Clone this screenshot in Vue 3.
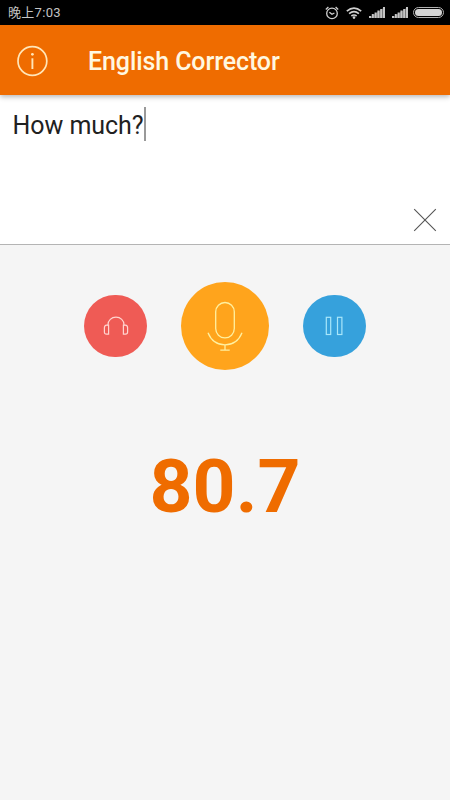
<script setup>
    import { ref } from 'vue';

    const time = '晚上7:03';
    const title = 'English Corrector';
    const sentence = ref('How much?');
    const score = ref('80.7');

    // heights of the signal strength bars
    const bars = [2, 4, 5.5, 7.5, 9, 11];

    const clear = () => {
        sentence.value = '';
    };
</script>

<template>
    <div class="screen">
        <!-- Status bar -->
        <div class="status-bar">
            <span class="status-time">{{ time }}</span>
            <div class="status-icons">
                <svg class="alarm" width="14" height="14" viewBox="0 0 14 14">
                    <circle cx="7" cy="7.4" r="5.3" />
                    <path d="M4.4 6.2L7 8.3L9.4 7M.8 3.4L3.4 1.1M13.2 3.4L10.6 1.1" />
                </svg>
                <svg class="wifi" width="16" height="12" viewBox="0 0 16 12">
                    <path d="M.8 4.1Q8 -2 15.2 4.1M3.1 6.6Q8 2.6 12.9 6.6M5.4 9Q8 7 10.6 9" />
                    <circle cx="8" cy="10.6" r="1.3" />
                </svg>
                <svg v-for="n in 2" :key="n" class="signal" width="16" height="11" viewBox="0 0 16 11">
                    <path class="wedge" d="M0 11L16 0V11Z" />
                    <rect
                        v-for="(h, i) in bars"
                        :key="i"
                        :x="i * 2.8"
                        :y="11 - h"
                        width="2"
                        :height="h"
                    />
                </svg>
                <div class="battery"><div class="battery-level"></div></div>
            </div>
        </div>

        <!-- Toolbar -->
        <header class="toolbar">
            <button class="info-btn" aria-label="Info">
                <svg width="32" height="32" viewBox="0 0 32 32">
                    <circle class="ring" cx="16.4" cy="16" r="14.4" />
                    <circle class="dot" cx="16.4" cy="9.3" r="1.4" />
                    <path class="stem" d="M16.4 13.3V24" />
                </svg>
            </button>
            <h1 class="title">{{ title }}</h1>
        </header>

        <!-- Sentence input -->
        <section class="editor">
            <div class="sentence">
                <span class="sentence-text">{{ sentence }}</span>
                <span class="caret"></span>
            </div>
            <button class="clear-btn" aria-label="Clear" @click="clear">
                <svg width="24" height="24" viewBox="0 0 24 24">
                    <path d="M1.2 1.2L22.8 22.8M22.8 1.2L1.2 22.8" />
                </svg>
            </button>
        </section>

        <!-- Listen / Record / Pause -->
        <div class="controls">
            <button class="round-btn listen" aria-label="Listen">
                <svg width="26" height="20" viewBox="0 0 26 20">
                    <path d="M5 9.5V8.8C5 4.6 8.4 1.2 13 1.2S21 4.6 21 8.8V9.5" />
                    <path d="M5.6 9.2V18.2H3.6Q1.4 18.2 1.4 16V11.8Q1.4 9.5 3.6 9.2ZM20.4 9.2V18.2H22.4Q24.6 18.2 24.6 16V11.8Q24.6 9.5 22.4 9.2Z" />
                </svg>
            </button>
            <button class="round-btn record" aria-label="Record">
                <svg width="36" height="50" viewBox="0 0 36 50">
                    <rect x="8.7" y="1.5" width="18.6" height="35.4" rx="9.3" />
                    <path d="M1 31.8C4 39.3 10.3 43.8 18 43.8S32 39.3 35 31.8M18 43.8V49.2M13.3 49.2H22.7" />
                </svg>
            </button>
            <button class="round-btn pause" aria-label="Pause">
                <svg width="18" height="20" viewBox="0 0 18 20">
                    <rect x="1.3" y="1.3" width="4.4" height="17.2" />
                    <rect x="12.5" y="1.3" width="4.4" height="17.2" />
                </svg>
            </button>
        </div>

        <div class="score">{{ score }}</div>
    </div>
</template>

<style>
    body {
        margin: 0;
    }
</style>

<style scoped>
    .screen {
        height: 800px;
        overflow: hidden;
        display: flex;
        flex-direction: column;
        background: #f5f5f5;
        font-family: Roboto, 'Noto Sans CJK SC', sans-serif;
    }

    button {
        display: flex;
        align-items: center;
        justify-content: center;
        border: none;
        padding: 0;
        background: none;
        cursor: pointer;
    }

    svg {
        display: block;
        fill: none;
    }

    .status-bar {
        box-sizing: border-box;
        height: 25px;
        flex-shrink: 0;
        display: flex;
        align-items: center;
        justify-content: space-between;
        padding: 0 6px 0 8px;
        background: #000;
    }

    .status-time {
        color: #c4c4c4;
        font-size: 13px;
        line-height: 25px;
        letter-spacing: 0.3px;
    }

    .status-icons {
        display: flex;
        align-items: center;
    }

    .alarm {
        stroke: #d0d0d0;
        stroke-width: 1.3;
        margin-right: 7px;
    }

    .wifi {
        stroke: #d0d0d0;
        stroke-width: 1.7;
        margin-right: 7px;
    }

    .wifi circle {
        fill: #d0d0d0;
        stroke: none;
    }

    .signal {
        fill: #c4c4c4;
        margin-right: 7px;
    }

    .signal .wedge {
        fill: #666;
    }

    .signal + .battery {
        margin-left: -2px;
    }

    .battery {
        box-sizing: border-box;
        width: 31px;
        height: 11px;
        padding: 1px;
        border: 1px solid #b0b0b0;
        border-radius: 6px;
    }

    .battery-level {
        height: 100%;
        border-radius: 4px;
        background: #d4d4d4;
    }

    .toolbar {
        position: relative;
        z-index: 1;
        height: 70px;
        flex-shrink: 0;
        display: flex;
        align-items: center;
        padding-left: 16px;
        background: #ef6c00;
        box-shadow: 0 2px 5px rgba(0, 0, 0, 0.28);
    }

    .info-btn {
        margin-top: 2px;
    }

    .info-btn .ring {
        stroke: #ffe6b8;
        stroke-width: 1.7;
    }

    .info-btn .dot {
        fill: #ffe6b8;
    }

    .info-btn .stem {
        stroke: #ffe6b8;
        stroke-width: 1.9;
    }

    .title {
        margin: 4px 0 0 40px;
        color: #fff8e1;
        font-size: 25px;
        font-weight: 500;
        line-height: 30px;
        letter-spacing: -0.1px;
    }

    .editor {
        box-sizing: border-box;
        height: 150px;
        flex-shrink: 0;
        display: flex;
        flex-direction: column;
        justify-content: space-between;
        padding: 12px 13px 12px 12.5px;
        background: #fff;
        border-bottom: 1px solid #b4b4b4;
    }

    .sentence {
        display: flex;
        align-items: center;
        height: 34px;
        color: #212121;
        font-size: 25px;
        line-height: 34px;
        letter-spacing: -0.05px;
    }

    .sentence-text {
        padding-top: 3px;
    }

    .caret {
        width: 2px;
        height: 34px;
        background: #999;
    }

    .clear-btn {
        align-self: flex-end;
    }

    .clear-btn path {
        stroke: #555;
        stroke-width: 1.1;
    }

    .controls {
        display: flex;
        align-items: center;
        justify-content: center;
        gap: 34px;
        margin-top: 37px;
    }

    .round-btn {
        width: 62.6px;
        height: 62.6px;
        border-radius: 50%;
    }

    .listen {
        background: #ef5b55;
    }

    .listen path {
        stroke: #ffd5d0;
        stroke-width: 1.2;
    }

    .record {
        width: 88px;
        height: 88px;
        background: #ffa41c;
    }

    .record svg {
        stroke: #fff0a0;
        stroke-width: 1.3;
    }

    .pause {
        background: #36a1dc;
    }

    .pause rect {
        stroke: #a8e6fa;
        stroke-width: 1.2;
    }

    .score {
        margin-top: 72px;
        color: #ef6c00;
        font-size: 75px;
        font-weight: 700;
        line-height: 88px;
        text-align: center;
    }
</style>
